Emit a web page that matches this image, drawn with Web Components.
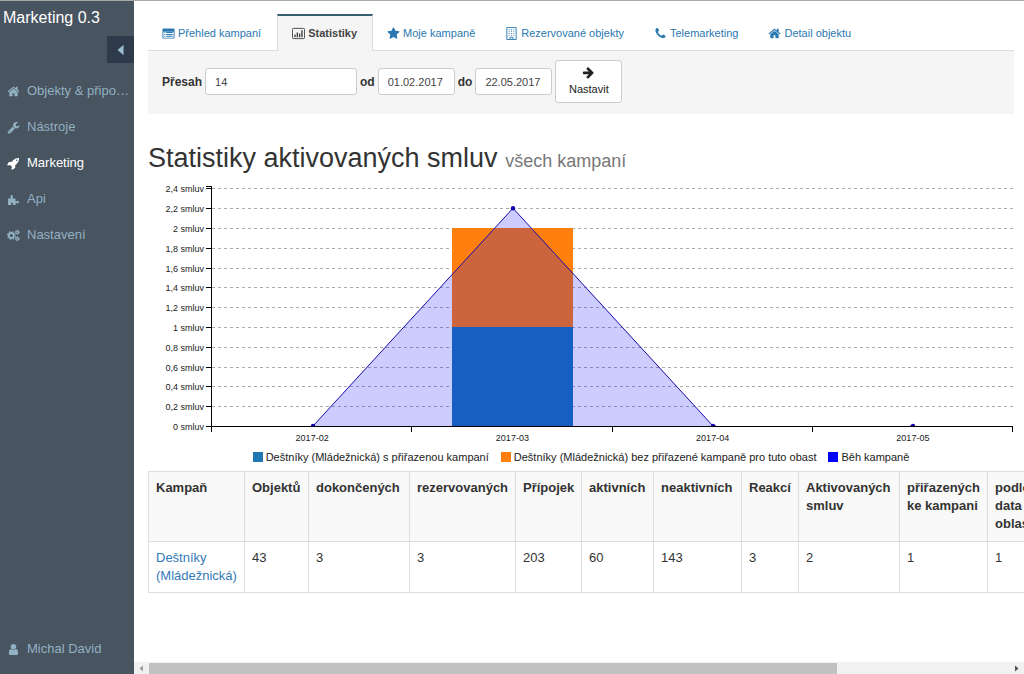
<!DOCTYPE html>
<html lang="cs">
<head>
<meta charset="utf-8">
<meta name="viewport" content="width=device-width, initial-scale=1">
<title>Marketing 0.3 – Statistiky</title>
<style>
html, body { margin: 0; }
body { font-family: "Liberation Sans", Arial, sans-serif; font-size: 13px; line-height: 18px; color: #333; background: #fff; }
</style>
</head>
<body>
<app-shell>
  <side-bar slot="side" brand="Marketing 0.3">
    <side-item icon="home">Objekty &amp; připojky</side-item>
    <side-item icon="wrench">Nástroje</side-item>
    <side-item icon="rocket" active>Marketing</side-item>
    <side-item icon="puzzle">Api</side-item>
    <side-item icon="cogs">Nastavení</side-item>
    <side-item slot="user" icon="user">Michal David</side-item>
  </side-bar>
  <tab-bar>
    <tab-link icon="list">Přehled kampaní</tab-link>
    <tab-link icon="chart" active>Statistiky</tab-link>
    <tab-link icon="star">Moje kampaně</tab-link>
    <tab-link icon="building">Rezervované objekty</tab-link>
    <tab-link icon="phone">Telemarketing</tab-link>
    <tab-link icon="home">Detail objektu</tab-link>
  </tab-bar>
  <filter-form></filter-form>
  <page-heading>Statistiky aktivovaných smluv <span slot="note">všech kampaní</span></page-heading>
  <stats-chart></stats-chart>
  <campaign-table></campaign-table>
  <scroll-track slot="scroll"></scroll-track>
</app-shell>

<script>
const ICONS = {
  home: ['0 0 1792 1792', '<path d="M1472 992v480q0 26-19 45t-45 19h-384v-384h-256v384h-384q-26 0-45-19t-19-45v-480q0-1 .5-3t.5-3l575-474 575 474q1 2 1 6zm223-69l-62 74q-8 9-21 11h-3q-13 0-21-7l-692-577-692 577q-12 8-24 7-13-2-21-11l-62-74q-8-10-7-23.5t11-21.5l719-599q32-26 76-26t76 26l244 204v-195q0-14 9-23t23-9h192q14 0 23 9t9 23v408l219 182q10 8 11 21.5t-7 23.5z"/>'],
  star: ['0 0 1792 1792', '<path d="M1728 647q0 22-26 48l-363 354 86 500q1 7 1 20 0 21-10.5 35.5t-30.5 14.5q-19 0-40-12l-449-236-449 236q-22 12-40 12-21 0-31.5-14.5t-10.5-35.5q0-6 2-20l86-500-364-354q-25-27-25-48 0-37 56-46l502-73 225-455q19-41 49-41t49 41l225 455 502 73q56 9 56 46z"/>'],
  phone: ['0 0 1792 1792', '<path d="M1600 1240q0 27-10 70.5t-21 68.5q-21 50-122 106-94 51-186 51-27 0-53-3.5t-57.5-12.5-47-14.5-55.5-20.5-49-18q-98-35-175-83-127-79-264-216t-216-264q-48-77-83-175-3-9-18-49t-20.5-55.5-14.5-47-12.5-57.5-3.5-53q0-92 51-186 56-101 106-122 25-11 68.5-21t70.5-10q14 0 21 3 18 6 53 76 11 19 30 54t35 63.5 31 53.5q3 4 17.5 25t21.5 35.5 7 28.5q0 20-28.5 50t-62 55-62 53-28.5 46q0 9 5 22.5t8.5 20.5 14 24 11.5 19q76 137 174 235t235 174q2 1 19 11.5t24 14 20.5 8.5 22.5 5q18 0 46-28.5t53-62 55-62 50-28.5q14 0 28.5 7t35.5 21.5 25 17.5q25 15 53.5 31t63.5 35 54 30q70 35 76 53 3 7 3 21z"/>'],
  wrench: ['0 0 1792 1792', '<path d="M448 1472q0-26-19-45t-45-19-45 19-19 45 19 45 45 19 45-19 19-45zm644-420l-682 682q-37 37-90 37-52 0-91-37l-106-108q-38-36-38-90 0-53 38-91l681-681q39 98 114.5 173.5t173.5 114.5zm634-435q0 39-23 106-47 134-164.5 217.5t-258.5 83.5q-185 0-316.5-131.5t-131.5-316.5 131.5-316.5 316.5-131.5q58 0 121.5 16.5t107.5 46.5q16 11 16 28t-16 28l-293 169v224l193 107q5-3 79-48.5t135.5-81 70.5-35.5q15 0 23.5 10t8.5 25z"/>'],
  rocket: ['0 0 1792 1792', '<path d="M1440 448q0-40-28-68t-68-28-68 28-28 68 28 68 68 28 68-28 28-68zm224-288q0 249-75.5 430.5t-253.5 360.5q-81 80-195 176l-20 379q-2 16-16 26l-384 224q-7 4-16 4-12 0-23-9l-64-64q-13-14-8-32l85-276-281-281-276 85q-3 1-9 1-14 0-23-9l-64-64q-17-19-5-39l224-384q10-14 26-16l379-20q96-114 176-195 188-187 358-258t431-71q14 0 24 9.5t10 22.5z"/>'],
  user: ['0 0 1792 1792', '<path d="M1536 1399q0 109-62.5 187t-150.5 78h-854q-88 0-150.5-78t-62.5-187q0-85 8.5-160.5t31.5-152 58.5-131 94-89 134.5-34.5q131 128 313 128t313-128q76 0 134.5 34.5t94 89 58.5 131 31.5 152 8.5 160.5zm-256-887q0 159-112.5 271.5t-271.5 112.5-271.5-112.5-112.5-271.5 112.5-271.5 271.5-112.5 271.5 112.5 112.5 271.5z"/>'],
  arrow: ['0 0 1792 1792', '<path d="M1600 960q0 54-37 91l-651 651q-39 37-91 37-51 0-90-37l-75-75q-38-38-38-91t38-91l293-293h-704q-52 0-84.5-37.5t-32.5-90.5v-128q0-53 32.5-90.5t84.5-37.5h704l-293-294q-38-36-38-90t38-90l75-75q38-38 90-38 53 0 91 38l651 651q37 35 37 90z"/>'],
  puzzle: ['0 0 14 14', '<path d="M1 6h2.600q.9 0 .5-.9Q3.200 3.600 3.900 2.700q.8-1 2-.3.900.7.400 2.100Q5.900 6 7 6h2.200v2.400q.1 1 1 .5 1.500-1 2.500 0 .7 1.200-.2 2-.9.700-2.200-.1-1-.4-1.100.5V13H6.800q-.9-.1-.6-.9.600-1.400-.6-1.700-1.400-.1-1.200 1.200.7 1.200-.4 1.400H1z"/>'],
  cogs: ['0 0 14 14', '<g fill="none" stroke="currentColor"><circle cx="4.700" cy="7" r="2.700" stroke-width="2"/><circle cx="4.700" cy="7" r="4.100" stroke-width="1.200" stroke-dasharray="1.600 1.620"/><circle cx="11" cy="3.500" r="1.500" stroke-width="1.300"/><circle cx="11" cy="3.500" r="2.300" stroke-width=".8" stroke-dasharray="1.100 1.300"/><circle cx="11" cy="10.500" r="1.500" stroke-width="1.300"/><circle cx="11" cy="10.500" r="2.300" stroke-width=".8" stroke-dasharray="1.100 1.300"/></g>'],
  list: ['0 0 14 14', '<path fill-rule="evenodd" d="M1.500 1.500h11q1 0 1 1v9q0 1-1 1h-11q-1 0-1-1v-9q0-1 1-1zM1.500 5v6.500h11V5z"/><path d="M2.500 5.500h1v1h-1zm2 0h7v1h-7zm-2 2h1v1h-1zm2 0h7v1h-7zm-2 2h1v1h-1zm2 0h7v1h-7z"/>'],
  chart: ['0 0 14 14', '<rect x=".5" y="1.500" width="13" height="11" rx="1" fill="none" stroke="currentColor"/><path d="M2.500 8h1.500v3H2.500zm2.500-2h1.500v5H5zm2.500 1H9v4H7.500zM10 3.500h1.500V11H10z"/>'],
  building: ['0 0 14 14', '<path d="M2 .5h10v13H2zM5.500 13v-2h3v2" fill="none" stroke="currentColor"/><path d="M4 2.500h1v1H4zm2.500 0h1v1h-1zm2.500 0h1v1H9zM4 4.500h1v1H4zm2.500 0h1v1h-1zm2.500 0h1v1H9zM4 6.500h1v1H4zm2.500 0h1v1h-1zm2.500 0h1v1H9zM4 8.500h1v1H4zm2.500 0h1v1h-1zm2.500 0h1v1H9z"/>'],
  left: ['0 0 14 14', '<path d="M10 1v12L3 7z"/>'],
  right: ['0 0 14 14', '<path d="M4 1v12l7-6z"/>']
};

class BaseElement extends HTMLElement {
  connectedCallback() {
    if (!this.shadowRoot) this.attachShadow({ mode: 'open' }).innerHTML = this.render();
  }
}

customElements.define('ui-icon', class extends BaseElement {
  render() {
    const [box, body] = ICONS[this.getAttribute('name')];
    return `<style>:host{display:inline-flex;flex:none;width:13px;height:13px}svg{width:100%;height:100%;fill:currentColor}</style>
      <svg viewBox="${box}" aria-hidden="true">${body}</svg>`;
  }
});

customElements.define('app-shell', class extends BaseElement {
  render() {
    return `<style>
      :host{display:grid;grid-template-columns:134px minmax(0,1fr);min-height:100vh;box-sizing:border-box;border-top:1px solid #aaa}
      .side{display:grid}
      .main{display:flex;flex-direction:column;overflow:hidden}
      main{flex:1;padding:13px 10px 14px 14px}
    </style>
    <div class="side"><slot name="side"></slot></div>
    <div class="main"><main><slot></slot></main><slot name="scroll"></slot></div>`;
  }
});

customElements.define('side-bar', class extends BaseElement {
  render() {
    return `<style>
      :host{display:flex;flex-direction:column;background:#48545f;color:#fff;min-width:0}
      header{font-size:16px;line-height:20px;padding:7px 3px 8px}
      button{align-self:flex-end;display:grid;place-items:center;width:27px;height:27px;border:0;padding:0;background:#2f3a4b;color:#9cbdd0}
      button ui-icon{width:12px;height:12px}
      nav{display:flex;flex-direction:column;padding-top:10px}
      footer{margin-top:auto;padding-bottom:7px}
    </style>
    <header>${this.getAttribute('brand')}</header>
    <button type="button" aria-label="Sbalit menu"><ui-icon name="left"></ui-icon></button>
    <nav><slot></slot></nav>
    <footer><slot name="user"></slot></footer>`;
  }
});

customElements.define('side-item', class extends BaseElement {
  render() {
    return `<style>
      :host{display:block;color:#92b1c3}
      :host([active]){color:#fff}
      a{display:flex;align-items:center;gap:7px;height:36px;padding:0 3px 0 7px;color:inherit;text-decoration:none}
      span{overflow:hidden;white-space:nowrap;text-overflow:ellipsis}
    </style>
    <a href="#"><ui-icon name="${this.getAttribute('icon')}"></ui-icon><span><slot></slot></span></a>`;
  }
});

customElements.define('tab-bar', class extends BaseElement {
  render() {
    return `<style>
      :host{display:block}
      nav{display:flex;border-bottom:1px solid #ddd}
    </style><nav><slot></slot></nav>`;
  }
});

customElements.define('tab-link', class extends BaseElement {
  render() {
    return `<style>
      :host{display:block;color:#2a78b0;font-size:11px;line-height:16px}
      a{display:flex;align-items:center;gap:3px;height:36px;box-sizing:border-box;padding:2px 16px 0 14px;color:inherit;text-decoration:none;white-space:nowrap}
      :host([active]){color:#444;font-weight:bold;margin-bottom:-1px}
      :host([active]) a{height:37px;padding:0 15px 1px 14px;border:1px solid #ddd;border-top:2px solid #33606f;border-bottom:0;background:#f5f5f5}
    </style>
    <a href="#"><ui-icon name="${this.getAttribute('icon')}"></ui-icon><slot></slot></a>`;
  }
});

customElements.define('filter-form', class extends BaseElement {
  render() {
    return `<style>
      :host{display:block;background:#f5f5f5}
      form{display:flex;align-items:center;gap:3px;padding:9px 14px 11px}
      label{font-size:12px;font-weight:bold}
      input,button{font-family:inherit;font-size:11px;line-height:16px;color:#444;background:#fff;border:1px solid #ccc;border-radius:3px;box-sizing:border-box}
      input{height:27px;width:77px;padding:0 9px}
      .wide{width:152px}
      button{display:flex;flex-direction:column;align-items:center;gap:2px;padding:5px 12px;width:67px;height:43px;color:#222}
    </style>
    <form>
      <label for="over">Přesah</label><input id="over" class="wide" value="14">
      <label for="from">od</label><input id="from" value="01.02.2017">
      <label for="to">do</label><input id="to" value="22.05.2017">
      <button type="button"><ui-icon name="arrow"></ui-icon>Nastavit</button>
    </form>`;
  }
});

customElements.define('page-heading', class extends BaseElement {
  render() {
    return `<style>
      :host{display:block}
      h1{margin:29px 0 4px;font-size:27px;line-height:30px;font-weight:normal}
      small{font-size:18px;color:#777}
    </style><h1><slot></slot><small><slot name="note"></slot></small></h1>`;
  }
});

customElements.define('stats-chart', class extends BaseElement {
  render() {
    const left = 64, right = 865, base = 246, step = 99 / 5;
    const months = ['2017-02', '2017-03', '2017-04', '2017-05'];
    const slot = (right - left) / months.length;
    const at = v => base - v * step * 5;
    let grid = '', axis = '';
    for (let i = 0; i <= 12; i++) {
      const y = Math.round(base - i * step) + .5;
      if (i) grid += `<path d="M${left} ${y}H${right}"/>`;
      axis += `<path d="M${left - 6} ${y}h6"/><text x="56" y="${y + 3}" text-anchor="end">${String(i * 2 / 10).replace('.', ',')} smluv</text>`;
    }
    months.forEach((m, i) => {
      axis += `<path d="M${Math.round(left + (i + 1) * slot) - .5} ${base}v6"/><text x="${left + (i + .5) * slot}" y="261" text-anchor="middle">${m}</text>`;
    });
    const pts = [0, 2.2, 0, 0].map((v, i) => [Math.round(left + (i + .5) * slot + .5), at(v)]);
    const line = pts.map(p => p.join(',')).join(' ');
    const legend = [['#1f77b4', 'Deštníky (Mládežnická) s přiřazenou kampaní'], ['#ff7f0e', 'Deštníky (Mládežnická) bez přiřazené kampaně pro tuto obast'], ['#0000ff', 'Běh kampaně']];
    return `<style>
      :host{display:block}
      svg{display:block;width:100%;height:auto}
      text{font-size:9px;fill:#222}
      .grid{stroke:#aaa;stroke-dasharray:3 3;fill:none}
      .axis path{stroke:#000;fill:none}
      ul{display:flex;justify-content:center;gap:12px;margin:0;padding:3px 0 6px;list-style:none;font-size:11px;line-height:16px;color:#222;white-space:nowrap}
      li{display:flex;align-items:center;gap:3px}
      i{width:10px;height:10px}
    </style>
    <svg viewBox="0 0 866 266" role="img" aria-label="Statistiky aktivovaných smluv">
      <defs><clipPath id="plot"><rect x="${left}" y="0" width="${right - left}" height="${base + 1}"/></clipPath></defs>
      <g class="grid">${grid}</g>
      <rect x="304" y="${at(2)}" width="121" height="99" fill="#ff7f0e"/>
      <rect x="304" y="${at(1)}" width="121" height="99" fill="#1f77b4"/>
      <g clip-path="url(#plot)">
        <polygon points="${line}" fill="#00f" fill-opacity=".2"/>
        <polyline points="${line}" fill="none" stroke="#1a0aa8"/>
        ${pts.map(p => `<circle cx="${p[0]}" cy="${p[1]}" r="2.200" fill="#1000b0"/>`).join('')}
        <path d="M${pts[2][0] + 3} ${base - .5}H${pts[3][0] - 3}" stroke="#fff"/>
      </g>
      <g class="axis">${axis}<path d="M${left - 6} 6.500h6M${left - .5} 6v246M${left} ${base + .5}H${right}"/></g>
    </svg>
    <ul>${legend.map(([c, t]) => `<li><i style="background:${c}"></i>${t}</li>`).join('')}</ul>`;
  }
});

customElements.define('campaign-table', class extends BaseElement {
  render() {
    const cols = [[96, 'Kampaň'], [64, 'Objektů', 43], [101, 'dokončených', 3], [106, 'rezervovaných', 3], [66, 'Přípojek', 203], [72, 'aktivních', 60], [88, 'neaktivních', 143], [57, 'Reakcí', 3], [101, 'Aktivovaných<br>smluv', 2], [88, 'přiřazených<br>ke kampani', 1], [120, 'podle<br>data a<br>oblasti', 1]];
    return `<style>
      :host{display:block}
      table{border-collapse:collapse;table-layout:fixed;width:${cols.reduce((s, c) => s + c[0], 0)}px}
      th,td{border:1px solid #ddd;padding:7px;text-align:left;vertical-align:top;white-space:nowrap}
      th{background:#f9f9f9;padding-bottom:8px}
      a{color:#337ab7;text-decoration:none}
    </style>
    <table>
      <colgroup>${cols.map(c => `<col style="width:${c[0]}px">`).join('')}</colgroup>
      <thead><tr>${cols.map(c => `<th scope="col">${c[1]}</th>`).join('')}</tr></thead>
      <tbody><tr><td><a href="#">Deštníky<br>(Mládežnická)</a></td>${cols.slice(1).map(c => `<td>${c[2]}</td>`).join('')}</tr></tbody>
    </table>`;
  }
});

customElements.define('scroll-track', class extends BaseElement {
  render() {
    return `<style>
      :host{display:flex;align-items:center;height:12px;background:#f1f1f1;color:#555}
      .track{flex:1;align-self:stretch;display:grid;grid-template-columns:80% 1fr}
      .thumb{background:#c1c1c1;margin-top:1px}
      ui-icon{width:7px;height:7px;padding:0 4px}
      .dim{color:#999}
    </style>
    <ui-icon class="dim" name="left"></ui-icon><div class="track"><div class="thumb"></div></div><ui-icon name="right"></ui-icon>`;
  }
});
</script>
</body>
</html>
